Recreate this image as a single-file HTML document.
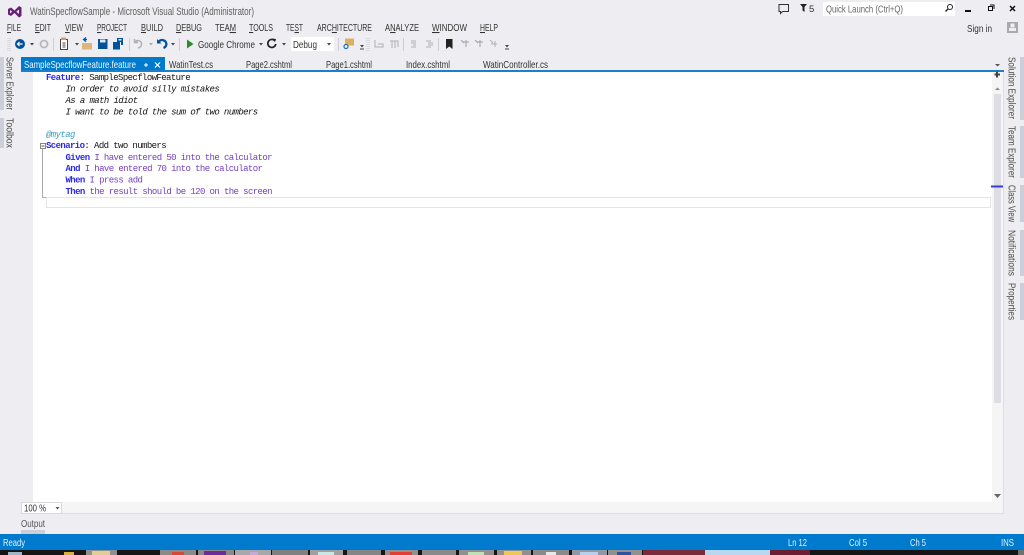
<!DOCTYPE html>
<html><head><meta charset="utf-8"><title>WatinSpecflowSample</title>
<style>
html,body{margin:0;padding:0;background:#eeeef2;width:1024px;height:555px;overflow:hidden}
svg{display:block;font-family:"Liberation Sans",sans-serif;filter:blur(.35px)}
.m{font-size:10.5px;fill:#333}
.t{font-size:10.5px;fill:#333}
.c{font-family:"Liberation Mono",monospace;font-size:9px;letter-spacing:-.6px;fill:#111}
.i{font-style:italic}
.k{fill:#2a2af0;font-weight:bold}
.p{fill:#7440bc}
.s{font-size:10.5px;fill:#e4f2fb}
.v{font-size:10.5px;fill:#4a4a4a}
</style></head><body>
<svg width="1024" height="555" viewBox="0 0 1024 555" xmlns="http://www.w3.org/2000/svg">
<rect width="1024" height="555" fill="#eeeef2"/>
<!-- logo -->
<path d="M8 9 L11 7.500 L14.500 10.500 L19 6 L21.500 7.500 V16 L19 17.500 L14.500 13 L11 16 L8 14.500 Z M10 10 V13.500 L12.200 11.800 Z M16.300 11.800 L19 14 V9.500 Z" fill="#68217a" fill-rule="evenodd"/>
<text x="30" y="15" font-size="11" fill="#5f5f5f" textLength="224" lengthAdjust="spacingAndGlyphs">WatinSpecflowSample - Microsoft Visual Studio (Administrator)</text>
<!-- top right -->
<path d="M779 4.500h9.500v7h-6l-2 2v-2h-1.500z" fill="none" stroke="#333" stroke-width="1"/>
<path d="M800 4h7l-2.500 3v5l-2-1.500v-3.500z" fill="#222"/>
<text x="809" y="12" font-size="9.500" fill="#333">5</text>
<rect x="823" y="2" width="132" height="14" fill="#fff"/>
<text x="826" y="12.500" font-size="10.500" fill="#666" textLength="77" lengthAdjust="spacingAndGlyphs">Quick Launch (Ctrl+Q)</text>
<circle cx="950" cy="7" r="2.500" fill="none" stroke="#222" stroke-width="1"/><path d="M948 9l-2.500 2.500" stroke="#222" stroke-width="1.300"/>
<rect x="965" y="10" width="6" height="2" fill="#111"/>
<path d="M988.500 6.500h4v4h-4zM990 5h4v4" fill="none" stroke="#111" stroke-width="1"/>
<path d="M1010 6l5 5m0-5l-5 5" stroke="#111" stroke-width="1.500"/>
<text x="967" y="32" font-size="10.500" fill="#333" textLength="25" lengthAdjust="spacingAndGlyphs">Sign in</text>
<rect x="1007" y="22" width="11" height="11" fill="#a9a9ae"/><rect x="1010.500" y="23.500" width="4" height="4" fill="#eee"/><rect x="1009" y="28" width="7" height="3" fill="#eee"/>
<!-- menu -->
<g class="m">
<text x="7" y="31" class="m" textLength="14" lengthAdjust="spacingAndGlyphs"><tspan text-decoration="underline">F</tspan>ILE</text>
<text x="35" y="31" class="m" textLength="16" lengthAdjust="spacingAndGlyphs"><tspan text-decoration="underline">E</tspan>DIT</text>
<text x="65" y="31" class="m" textLength="18" lengthAdjust="spacingAndGlyphs"><tspan text-decoration="underline">V</tspan>IEW</text>
<text x="97" y="31" class="m" textLength="30" lengthAdjust="spacingAndGlyphs"><tspan text-decoration="underline">P</tspan>ROJECT</text>
<text x="141" y="31" class="m" textLength="22" lengthAdjust="spacingAndGlyphs"><tspan text-decoration="underline">B</tspan>UILD</text>
<text x="176" y="31" class="m" textLength="26" lengthAdjust="spacingAndGlyphs"><tspan text-decoration="underline">D</tspan>EBUG</text>
<text x="215" y="31" class="m" textLength="21" lengthAdjust="spacingAndGlyphs">TEA<tspan text-decoration="underline">M</tspan></text>
<text x="249" y="31" class="m" textLength="24" lengthAdjust="spacingAndGlyphs"><tspan text-decoration="underline">T</tspan>OOLS</text>
<text x="286" y="31" class="m" textLength="17" lengthAdjust="spacingAndGlyphs">TE<tspan text-decoration="underline">S</tspan>T</text>
<text x="317" y="31" class="m" textLength="55" lengthAdjust="spacingAndGlyphs">ARC<tspan text-decoration="underline">H</tspan>ITECTURE</text>
<text x="385" y="31" class="m" textLength="34" lengthAdjust="spacingAndGlyphs">A<tspan text-decoration="underline">N</tspan>ALYZE</text>
<text x="432" y="31" class="m" textLength="35" lengthAdjust="spacingAndGlyphs"><tspan text-decoration="underline">W</tspan>INDOW</text>
<text x="480" y="31" class="m" textLength="18" lengthAdjust="spacingAndGlyphs"><tspan text-decoration="underline">H</tspan>ELP</text>
</g>
<!-- toolbar -->
<path d="M8 38v13M10 38v13" stroke="#c4c4cc" stroke-width="1" stroke-dasharray="1 1"/>
<circle cx="20" cy="44" r="5" fill="#00539c"/><path d="M17.500 44h5M19.500 42l-2 2 2 2" stroke="#fff" stroke-width="1.200" fill="none"/>
<path d="M30 43h4l-2 2.500z" fill="#444"/>
<circle cx="44" cy="44" r="3.500" fill="none" stroke="#b8b8bc" stroke-width="1.800"/>
<path d="M53.500 38v13" stroke="#ccced6"/>
<rect x="60.500" y="39.500" width="7" height="10" fill="#fff" stroke="#444"/><rect x="61" y="37.500" width="5" height="2.500" fill="#c8a060"/><path d="M62.500 43h3M62.500 45h3M62.500 47h3" stroke="#444"/>
<path d="M75 43h4l-2 2.500z" fill="#444"/>
<rect x="82" y="43" width="10" height="6.500" fill="#dcb67a"/><path d="M85 41.500v-2h2M86 37.500l-2.500 2 2.500 2" stroke="#00539c" stroke-width="1.200" fill="none"/>
<path d="M98 39h9.500v10h-9.500z" fill="#00539c"/><rect x="100" y="39.500" width="5.500" height="3" fill="#dbe8f4"/><rect x="100.500" y="45.500" width="4" height="3.500" fill="#0a4c8a"/>
<path d="M113 42h7v7.500h-7z" fill="#00539c"/><path d="M117 38h6v7h-2v-3h-4z" fill="#00539c"/><rect x="118.500" y="39" width="3" height="1.500" fill="#dbe8f4"/>
<path d="M129.500 38v13" stroke="#ccced6"/>
<path d="M134.500 39v3.500h3.500M135 42c2-2.500 6-1.500 6.500 1.500.3 2-1 4-3.500 4.500" fill="none" stroke="#b0b0b4" stroke-width="1.500"/>
<path d="M149 43h4l-2 2.500z" fill="#aaa"/>
<path d="M163.500 48c2.500-1 3.500-3.500 2.500-5.500-1-2.500-5-3.500-7-1" fill="none" stroke="#00539c" stroke-width="2.200"/><path d="M157 39v4.500h4.500z" fill="#00539c"/>
<path d="M171 43h4l-2 2.500z" fill="#444"/>
<path d="M179.500 38v13" stroke="#ccced6"/>
<path d="M187 39.500l6.500 4.500-6.500 4.500z" fill="#2f8a2c"/>
<text x="198" y="48" class="t" textLength="57" lengthAdjust="spacingAndGlyphs">Google Chrome</text>
<path d="M259 43h4l-2 2.500z" fill="#444"/>
<path d="M275 41a4 4 0 1 0 0.800 3" fill="none" stroke="#222" stroke-width="1.700"/><path d="M272 38.500l4 .5-1 3z" fill="#222"/>
<path d="M282 43h4l-2 2.500z" fill="#444"/>
<rect x="291" y="37" width="43" height="14" fill="#fff"/>
<text x="293" y="48" class="t" textLength="24" lengthAdjust="spacingAndGlyphs">Debug</text>
<path d="M327 43h4l-2 2.500z" fill="#444"/>
<path d="M338.500 38v13" stroke="#ccced6"/>
<rect x="345" y="38.500" width="9" height="7" fill="#dcb060"/><circle cx="346" cy="46.500" r="2" fill="#fff" stroke="#1b6bb8" stroke-width="1.200"/>
<path d="M360 45h4l-2 2.500z" fill="#444"/><path d="M360 49h4" stroke="#444"/>
<path d="M367 38v13M369 38v13" stroke="#c4c4cc" stroke-dasharray="1 1"/>
<path d="M375 40v7h8v-3h-5" fill="none" stroke="#b0b0b4"/>
<path d="M390 41h8v6M392 41v7M395 41v7" fill="none" stroke="#b0b0b4"/>
<path d="M403.500 38v13" stroke="#ccced6"/>
<path d="M411 41h5M411 43h5M413 45h3M411 47h5" stroke="#b0b0b4"/>
<path d="M426 41h5M428 43h5M428 45h5M426 47h5" stroke="#b0b0b4"/>
<path d="M438.500 38v13" stroke="#ccced6"/>
<path d="M446 39h6.500v10l-3.200-2.500-3.300 2.500z" fill="#222"/>
<path d="M461 40l3 3M466 40v7M463 42h6" stroke="#a0a0a4"/>
<path d="M475 40l3 3M480 40v7M477 42h6" stroke="#a0a0a4"/>
<path d="M490 40l3 3M495 41v6M491 44h6" stroke="#b0b0b4"/>
<path d="M505 45h4l-2 2.500z" fill="#444"/><path d="M505 49h4" stroke="#444"/>
<!-- doc tabs -->
<rect x="21" y="57" width="144" height="15" fill="#007acc"/>
<text x="24" y="68" font-size="10.500" fill="#f0f7fc" textLength="112" lengthAdjust="spacingAndGlyphs">SampleSpecflowFeature.feature</text>
<path d="M144 65h4M146 63v4" stroke="#fff" stroke-width="1"/>
<path d="M155 62.500l5 5m0-5l-5 5" stroke="#fff" stroke-width="1.200"/>
<text x="169" y="68" class="t" textLength="44" lengthAdjust="spacingAndGlyphs">WatinTest.cs</text>
<text x="246" y="68" class="t" textLength="46" lengthAdjust="spacingAndGlyphs">Page2.cshtml</text>
<text x="326" y="68" class="t" textLength="46" lengthAdjust="spacingAndGlyphs">Page1.cshtml</text>
<text x="406" y="68" class="t" textLength="44" lengthAdjust="spacingAndGlyphs">Index.cshtml</text>
<text x="483" y="68" class="t" textLength="65" lengthAdjust="spacingAndGlyphs">WatinController.cs</text>
<path d="M995 64h5l-2.500 2.500z" fill="#555"/>
<!-- editor -->
<rect x="21" y="70" width="983" height="444" fill="#fff"/>
<rect x="21" y="70" width="983" height="2" fill="#1c7fc9"/>
<rect x="21" y="72" width="12" height="430" fill="#eeeef2"/>
<rect x="21" y="502" width="983" height="11" fill="#f5f5f5"/>
<rect x="21" y="513" width="983" height="1" fill="#dedee4"/>
<rect x="1003" y="72" width="1" height="442" fill="#dedee4"/>
<!-- scrollbar -->
<rect x="992" y="72" width="11" height="430" fill="#f5f5f6"/>
<rect x="994" y="94" width="7" height="309" fill="#dddde3"/>
<path d="M994.500 73.500h1.500v-2h2v2h2v2h-2v2h-2v-2h-1.500z" fill="#444"/>
<path d="M995 90l2.500-2.500 2.500 2.500z" fill="#888"/>
<path d="M994 494h7l-3.500 4z" fill="#666"/>
<rect x="991" y="185.500" width="12" height="2" fill="#3a3ad0"/>
<!-- current line -->
<rect x="46.500" y="197.500" width="944" height="10" fill="#fff" stroke="#e4e4e4"/>
<!-- outline -->
<rect x="40.500" y="143.500" width="5" height="5" fill="#fff" stroke="#888"/><path d="M41.500 146h3" stroke="#555"/>
<path d="M42.500 149v48.500h3.500" fill="none" stroke="#aaa"/>
<!-- code -->
<text class="c" x="46" y="80"><tspan class="k">Feature</tspan>: SampleSpecflowFeature</text>
<text class="c i" x="65.500" y="91.500">In order to avoid silly mistakes</text>
<text class="c i" x="65.500" y="103">As a math idiot</text>
<text class="c i" x="65.500" y="114.500">I want to be told the sum of two numbers</text>
<text class="c i" x="46" y="137" style="fill:#3f9fba">@mytag</text>
<text class="c" x="46" y="148"><tspan class="k">Scenario</tspan>: Add two numbers</text>
<text class="c p" x="65.500" y="160"><tspan class="k">Given</tspan> I have entered 50 into the calculator</text>
<text class="c p" x="65.500" y="171"><tspan class="k">And</tspan> I have entered 70 into the calculator</text>
<text class="c p" x="65.500" y="182.500"><tspan class="k">When</tspan> I press add</text>
<text class="c p" x="65.500" y="194"><tspan class="k">Then</tspan> the result should be 120 on the screen</text>
<!-- zoom combo -->
<rect x="21.500" y="502.500" width="40" height="11" fill="#fff" stroke="#d8d8de"/>
<text x="24" y="511.500" font-size="10" fill="#333" textLength="22" lengthAdjust="spacingAndGlyphs">100 %</text>
<path d="M55.500 507h4l-2 2.500z" fill="#555"/>
<!-- output -->
<text x="21" y="527" font-size="10.500" fill="#555" textLength="24" lengthAdjust="spacingAndGlyphs">Output</text>
<rect x="21" y="530" width="24" height="4" fill="#ccced8"/>
<!-- left side -->
<rect x="0" y="57" width="4" height="53" fill="#ccced8"/>
<rect x="0" y="118" width="4" height="30" fill="#ccced8"/>
<text class="v" transform="translate(6.500,57) rotate(90)" textLength="53" lengthAdjust="spacingAndGlyphs">Server Explorer</text>
<text class="v" transform="translate(6.500,118) rotate(90)" textLength="30" lengthAdjust="spacingAndGlyphs">Toolbox</text>
<!-- right side -->
<rect x="1020" y="57" width="4" height="63" fill="#ccced8"/>
<rect x="1020" y="126" width="4" height="52" fill="#ccced8"/>
<rect x="1020" y="185" width="4" height="37" fill="#ccced8"/>
<rect x="1020" y="230" width="4" height="46" fill="#ccced8"/>
<rect x="1020" y="283" width="4" height="37" fill="#ccced8"/>
<text class="v" transform="translate(1008.500,57) rotate(90)" textLength="62" lengthAdjust="spacingAndGlyphs">Solution Explorer</text>
<text class="v" transform="translate(1008.500,126) rotate(90)" textLength="52" lengthAdjust="spacingAndGlyphs">Team Explorer</text>
<text class="v" transform="translate(1008.500,185) rotate(90)" textLength="37" lengthAdjust="spacingAndGlyphs">Class View</text>
<text class="v" transform="translate(1008.500,230) rotate(90)" textLength="46" lengthAdjust="spacingAndGlyphs">Notifications</text>
<text class="v" transform="translate(1008.500,283) rotate(90)" textLength="37" lengthAdjust="spacingAndGlyphs">Properties</text>
<!-- status -->
<rect x="0" y="534" width="1024" height="16" fill="#007acc"/>
<text x="3" y="546" class="s" textLength="22" lengthAdjust="spacingAndGlyphs">Ready</text>
<text x="788" y="546" class="s" textLength="19" lengthAdjust="spacingAndGlyphs">Ln 12</text>
<text x="849" y="546" class="s" textLength="18" lengthAdjust="spacingAndGlyphs">Col 5</text>
<text x="910" y="546" class="s" textLength="16" lengthAdjust="spacingAndGlyphs">Ch 5</text>
<text x="1001" y="546" class="s" textLength="13" lengthAdjust="spacingAndGlyphs">INS</text>
<!-- taskbar -->
<rect x="0" y="550" width="1024" height="5" fill="#151515"/>
<rect x="8" y="552" width="14" height="3" fill="#9cb8c8"/>
<rect x="64" y="552" width="10" height="3" fill="#d8b040"/>
<rect x="86" y="550" width="31" height="5" fill="#8f8f8f"/><rect x="92" y="551" width="18" height="4" fill="#e0cf90"/>
<rect x="160" y="550" width="36" height="5" fill="#8a8a8a"/><rect x="172" y="552" width="12" height="3" fill="#d84a30"/>
<rect x="198" y="550" width="36" height="5" fill="#8a8a8a"/><rect x="204" y="551" width="22" height="4" fill="#6a2c9a"/>
<rect x="235" y="550" width="36" height="5" fill="#a8a8a8"/><rect x="250" y="552" width="8" height="3" fill="#c8a8d8"/>
<rect x="272" y="550" width="36" height="5" fill="#808080"/>
<rect x="310" y="550" width="33" height="5" fill="#a0a0a0"/><rect x="318" y="552" width="16" height="3" fill="#c8e8e8"/>
<rect x="347" y="550" width="34" height="5" fill="#858585"/>
<rect x="385" y="550" width="33" height="5" fill="#909090"/><rect x="390" y="552" width="22" height="3" fill="#e04030"/>
<rect x="422" y="550" width="34" height="5" fill="#8a8a8a"/>
<rect x="459" y="550" width="35" height="5" fill="#909090"/><rect x="468" y="552" width="16" height="3" fill="#c0e0b8"/>
<rect x="497" y="550" width="34" height="5" fill="#909090"/><rect x="504" y="551" width="18" height="4" fill="#eec850"/>
<rect x="533" y="550" width="36" height="5" fill="#8a8a8a"/><rect x="546" y="552" width="10" height="3" fill="#e8e8e8"/>
<rect x="572" y="550" width="35" height="5" fill="#9098a8"/><rect x="580" y="552" width="18" height="3" fill="#b8d0f0"/>
<rect x="608" y="550" width="34" height="5" fill="#909090"/><rect x="617" y="552" width="14" height="3" fill="#3050a0"/>
<rect x="643" y="550" width="62" height="5" fill="#7a2a3a"/>
<rect x="705" y="550" width="65" height="5" fill="#b8d8f0"/>
<rect x="770" y="550" width="40" height="5" fill="#6a2030"/>
<rect x="1018" y="550" width="6" height="5" fill="#707070"/>
</svg>
</body></html>
